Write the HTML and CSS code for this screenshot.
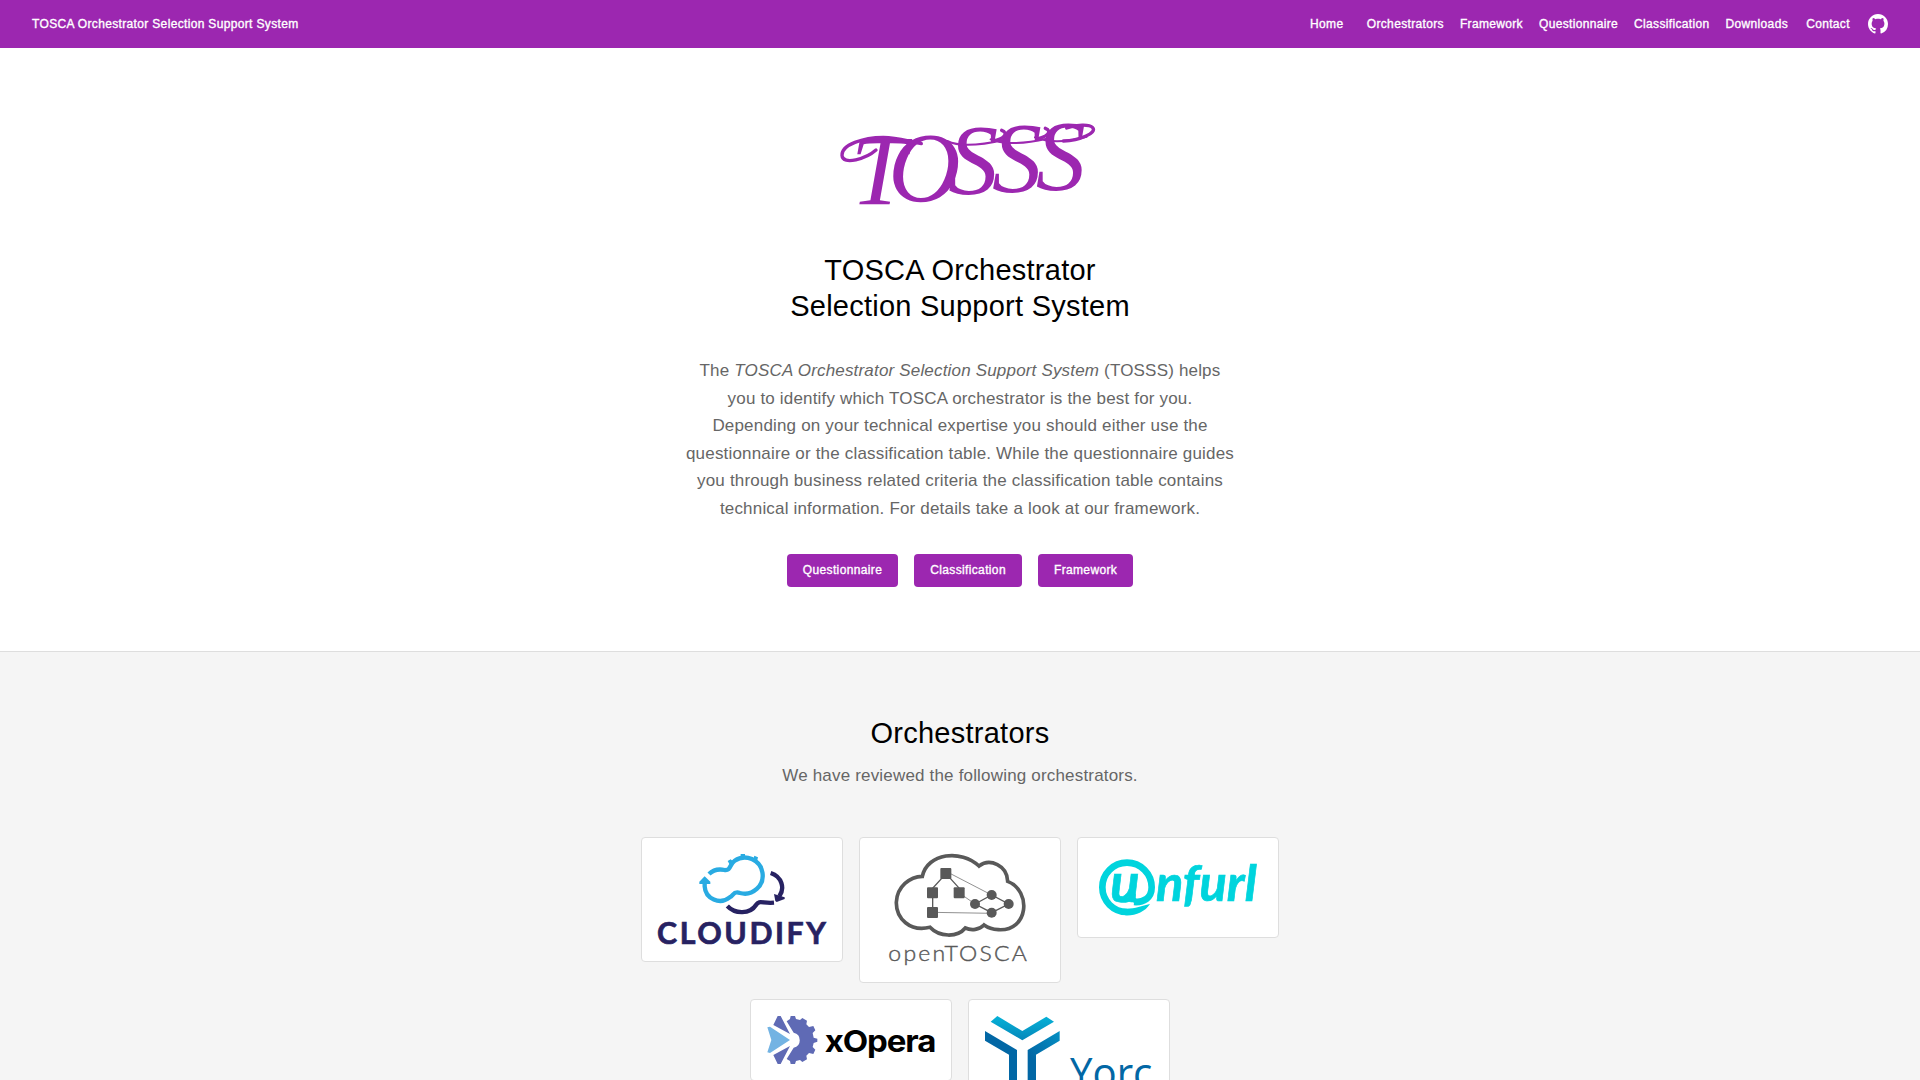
FILE: index.html
```html
<!DOCTYPE html>
<html lang="en">
<head>
<meta charset="utf-8">
<title>TOSCA Orchestrator Selection Support System</title>
<link rel="stylesheet" href="styles.css">
</head>
<body>
<header class="bar">
  <a class="brand">TOSCA Orchestrator Selection Support System</a>
  <nav class="nav">
    <a>Home</a><a>Orchestrators</a><a>Framework</a><a>Questionnaire</a><a>Classification</a><a>Downloads</a><a>Contact</a>
    <svg class="github" viewBox="0 0 16 16"><path d="M8 0C3.58 0 0 3.58 0 8c0 3.54 2.29 6.53 5.47 7.59.4.07.55-.17.55-.38 0-.19-.01-.82-.01-1.49-2.01.37-2.53-.49-2.69-.94-.09-.23-.48-.94-.82-1.13-.28-.15-.68-.52-.01-.53.63-.01 1.08.58 1.23.82.72 1.21 1.87.87 2.33.66.07-.52.28-.87.51-1.07-1.78-.2-3.64-.89-3.64-3.95 0-.87.31-1.59.82-2.15-.08-.2-.36-1.02.08-2.12 0 0 .67-.21 2.2.82.64-.18 1.32-.27 2-.27s1.36.09 2 .27c1.53-1.04 2.2-.82 2.2-.82.44 1.1.16 1.92.08 2.12.51.56.82 1.27.82 2.15 0 3.07-1.87 3.75-3.65 3.95.29.25.54.73.54 1.48 0 1.07-.01 1.93-.01 2.2 0 .21.15.46.55.38A8.01 8.01 0 0 0 16 8c0-4.42-3.58-8-8-8z"/></svg>
  </nav>
</header>
<main>
  <section class="hero">
    <svg class="logo" viewBox="0 0 840 330">
      <text class="logo-text" x="92 205 385 516 647" y="282 272 250 243 236">TOSSS</text>
      <path class="swash" d="M168 120C140 145 68 168 66 136C64 104 130 82 190 82C235 82 262 94 304 101"/>
      <path class="hair" d="M382 93C420 112 490 104 552 90M512 88C550 106 620 100 680 86M645 82C690 100 750 94 800 80"/>
      <path class="swash" d="M520 92C550 88 568 70 545 61M650 86C680 82 699 64 676 55M730 93C780 92 832 68 818 53C808 42 770 44 740 54"/>
    </svg>
    <h1>TOSCA Orchestrator<br>Selection Support System</h1>
    <p class="intro">The <em>TOSCA Orchestrator Selection Support System</em> (TOSSS) helps<br>you to identify which TOSCA orchestrator is the best for you.<br>Depending on your technical expertise you should either use the<br>questionnaire or the classification table. While the questionnaire guides<br>you through business related criteria the classification table contains<br>technical information. For details take a look at our framework.</p>
    <div class="actions"><a>Questionnaire</a><a>Classification</a><a>Framework</a></div>
  </section>
  <section class="tools">
    <h2>Orchestrators</h2>
    <p>We have reviewed the following orchestrators.</p>
    <div class="cards">
      <div class="card">
        <svg viewBox="84 87 504 273">
          <g fill="none" stroke-width="13">
            <path stroke="#29abe2" d="M237 147C252 132 270 132 284 135C303 138 298 118 314 107A54 54 0 1 1 330 204C309 197 311 212 299 217A46 46 0 0 1 224 184V172"/>
            <path stroke="#272262" d="M422 144C456 155 465 190 448 214M292 243C315 268 360 268 378 240C388 224 397 236 432 233"/>
          </g>
          <path fill="#29abe2" d="M224 154L241 170V177H208V170ZM293 108L302 103 312 112 301 122ZM332 87H345V98H332ZM373 92L384 97 381 109 370 103Z"/>
          <path fill="#272262" d="M432 207L464 217V222L440 231 436 228Z"/>
          <text class="cloudify" x="81" y="358" textLength="507" lengthAdjust="spacing">CLOUDIFY</text>
        </svg>
      </div>
      <div class="card">
        <svg viewBox="78 87 504 336">
          <path fill="#fff" stroke="#595959" stroke-width="11" d="M217 154C232 84 333 72 387 123C420 98 472 122 473 169C546 198 536 320 445 314Q420 313 402 300C388 314 365 318 346 309C322 338 268 337 240 307C180 322 138 280 139 232C141 184 180 155 217 154Z"/>
          <g fill="none" stroke="#595959"><path stroke-width="4" d="M288 146L248 190V262M288 146L328 190M375 237L425 210 476 237 425 263Z"/><path stroke-width="2" d="M288 139L425 210M328 204L375 237M248 262L425 265"/></g>
          <g fill="#595959"><rect x="271" y="129" width="33" height="33" rx="3"/><rect x="231" y="187" width="33" height="33" rx="3"/><rect x="311" y="187" width="33" height="33" rx="3"/><rect x="231" y="246" width="33" height="33" rx="3"/><circle cx="375" cy="237" r="15"/><circle cx="425" cy="210" r="15"/><circle cx="476" cy="237" r="15"/><circle cx="425" cy="263" r="15"/></g>
          <text class="opentosca" x="115" y="407" textLength="422" lengthAdjust="spacingAndGlyphs">openTOSCA</text>
        </svg>
      </div>
      <div class="card">
        <svg viewBox="72 87 504 201">
          <path fill="none" stroke="#00d4dd" stroke-width="20" d="M192 231C220 233 245 220 245 187A74 74 0 1 0 171 261"/>
          <path fill="#00d4dd" d="M160 251C195 253 212 242 240 237C225 261 195 273 165 271Z"/>
          <text class="unfurl" x="121" y="231" textLength="88" lengthAdjust="spacingAndGlyphs" font-size="162">u</text>
          <path fill="none" stroke="#00d4dd" stroke-width="14" d="M150 225C165 230 178 224 190 218Q190 228 205 230"/>
          <text class="unfurl" x="258" y="227" textLength="302" lengthAdjust="spacingAndGlyphs" font-size="147">nfurl</text>
        </svg>
      </div>
      <div class="card">
        <svg viewBox="81 78 504 144">
          <path fill="#5f6ab5" d="M152 78H165L168 87 180 90 187 84 201 92 199 103 207 111 220 108 226 121 218 129 221 143 232 146V155L221 159 218 171 226 179 220 192 207 189 199 197 201 208 187 216 180 210 168 213 165 222H152L150 213 140 207 161 173A23 23 0 0 0 161 128L140 94 150 87Z"/>
          <path fill="#5f6ab5" d="M113 78H122L150 132 100 105ZM113 222H122L150 168 100 195Z"/>
          <path fill="#73b3e3" d="M82 112L90 110 150 150 90 189 82 187 94 150Z"/>
          <text class="xopera" x="254" y="185" textLength="332" lengthAdjust="spacingAndGlyphs">xOpera</text>
        </svg>
      </div>
      <div class="card">
        <svg viewBox="75 78 504 300">
          <defs>
            <linearGradient id="cyan" x2="0" y2="1"><stop stop-color="#06b2d8"/><stop offset="1" stop-color="#0587ba"/></linearGradient>
            <linearGradient id="blue" gradientUnits="userSpaceOnUse" x1="300" y1="122" x2="210" y2="200"><stop stop-color="#0591c4"/><stop offset="1" stop-color="#0267a5"/></linearGradient>
          </defs>
          <path fill="url(#cyan)" d="M112 78L187 123 259 80 282 95 187 151 92 95Z"/>
          <path fill="#0267a5" d="M75 123L171 180V370H147V194L75 152Z"/>
          <path fill="url(#blue)" d="M299 123V152L228 194V370H203V180Z"/>
          <text class="yorc" x="330" y="294" textLength="247" lengthAdjust="spacingAndGlyphs">Yorc</text>
        </svg>
      </div>
    </div>
  </section>
</main>
</body>
</html>
```
FILE: styles.css
```css
* { box-sizing: border-box; }
body {
  margin: 0;
  height: 100vh;
  overflow: hidden;
  background: #fff;
  color: #000;
  font: 17px/27.5px "Liberation Sans", Arial, sans-serif;
  letter-spacing: 0.18px;
}
h1, h2, p { margin: 0; }
.bar {
  height: 48px;
  padding: 0 32px;
  display: flex;
  align-items: center;
  justify-content: space-between;
  background: #9c27b0;
  color: #fff;
  font-size: 12px;
  line-height: 20px;
  letter-spacing: 0.34px;
  -webkit-text-stroke: 0.35px #fff;
}
.nav { display: flex; align-items: center; }
.nav a { min-width: 64px; padding: 0 8px; text-align: center; }
.github { width: 20px; height: 20px; margin-left: 8px; fill: #fff; }
.hero {
  height: 604px;
  padding-top: 62px;
  border-bottom: 1px solid #dedede;
  display: flex;
  flex-direction: column;
  align-items: center;
  text-align: center;
}
.logo { width: 280px; height: 110px; flex: none; overflow: visible; }
.logo-text { font: italic 300px "Liberation Serif", serif; fill: #9c27b0; letter-spacing: 0; }
.swash { fill: none; stroke: #9c27b0; stroke-width: 10; stroke-linecap: round; }
.hair { fill: none; stroke: #9c27b0; stroke-width: 6; stroke-linecap: round; }
h1, h2 { font-size: 29px; font-weight: 400; line-height: 36px; letter-spacing: 0.25px; }
h1 { margin-top: 32px; }
.intro { margin-top: 33px; color: #666; }
.actions { display: flex; gap: 16px; margin-top: 32px; }
.actions a {
  height: 33px;
  padding: 0 16px;
  border-radius: 4px;
  background: #9c27b0;
  color: #fff;
  font-size: 12px;
  line-height: 32px;
  letter-spacing: 0.36px;
  -webkit-text-stroke: 0.35px #fff;
}
.tools { height: 428px; padding-top: 63px; background: #f5f5f5; text-align: center; }
.tools p { margin-top: 11px; color: #666; }
.cards {
  width: 680px;
  margin: 47px auto 0;
  display: flex;
  flex-wrap: wrap;
  justify-content: center;
  align-items: flex-start;
  gap: 16px;
}
.card { width: 202px; padding: 16px; border: 1px solid #dedede; border-radius: 4px; background: #fff; }
.card svg { display: block; width: 168px; letter-spacing: 0; overflow: visible; }
.cloudify { font: 700 91px Lato, sans-serif; fill: #272262; stroke: #272262; stroke-width: 2; }
.opentosca { font: 300 62px Lato, sans-serif; fill: #595959; stroke: #595959; stroke-width: 1.2; letter-spacing: 6px; }
.unfurl { font-family: Lato, sans-serif; font-weight: 700; font-style: italic; fill: #00d4dd; stroke: #00d4dd; stroke-width: 2; }
.xopera { font: 700 91px Inter, sans-serif; fill: #000; letter-spacing: -3px; }
.yorc { font: 400 128px "Open Sans", sans-serif; fill: #0267a5; }
```
